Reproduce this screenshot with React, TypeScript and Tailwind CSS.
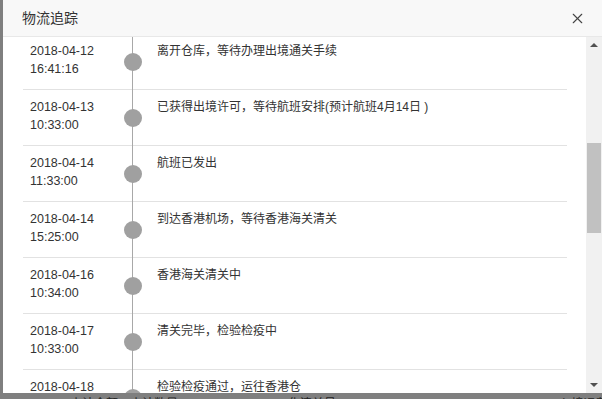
import { X } from "lucide-react";

const records = [
  { date: "2018-04-12", time: "16:41:16", text: "离开仓库，等待办理出境通关手续" },
  { date: "2018-04-13", time: "10:33:00", text: "已获得出境许可，等待航班安排(预计航班4月14日 )" },
  { date: "2018-04-14", time: "11:33:00", text: "航班已发出" },
  { date: "2018-04-14", time: "15:25:00", text: "到达香港机场，等待香港海关清关" },
  { date: "2018-04-16", time: "10:34:00", text: "香港海关清关中" },
  { date: "2018-04-17", time: "10:33:00", text: "清关完毕，检验检疫中" },
  { date: "2018-04-18", time: "10:33:00", text: "检验检疫通过，运往香港仓" },
];

export default function App() {
  return (
    <div className="w-[602px] h-[399px] overflow-hidden bg-[#7f7f7f] font-['Liberation_Sans','Noto_Sans_CJK_SC',sans-serif] text-[#333]">
      <div className="pl-[3px]">
        <div className="h-[393px] flex flex-col bg-white">
          {/* Header */}
          <div className="h-[37px] shrink-0 flex items-center justify-between pl-[19px] pr-[16px] bg-[#f8f8f8] border-b border-[#e8e8e8]">
            <span className="text-[14px] leading-none">物流追踪</span>
            <X className="w-[17px] h-[17px] text-[#444]" strokeWidth={1.6} />
          </div>

          {/* Body */}
          <div className="flex flex-1 min-h-0">
            <div className="flex-1 overflow-hidden">
              <div className="-mt-[3px] ml-[20px] mr-[19px]">
                {records.map((r, i) => (
                  <div key={i} className="flex h-[56px] border-b border-[#e2e2e2]">
                    <div className="w-[100px] pl-[7px] pt-[8px] text-[12.5px] leading-[18px]">
                      <div>{r.date}</div>
                      <div>{r.time}</div>
                    </div>
                    <div className="relative w-[20px] flex items-center justify-center">
                      <div className="absolute left-[9px] -top-px -bottom-px w-px bg-[#a8a8a8]" />
                      <div className="relative w-[18px] h-[18px] rounded-full bg-[#a0a0a0]" />
                    </div>
                    <div className="pl-[14px] pt-[8px] text-[12px] leading-[18px]">{r.text}</div>
                  </div>
                ))}
              </div>
            </div>

            {/* Scrollbar */}
            <div className="w-[16px] shrink-0 flex flex-col bg-[#f1f1f1]">
              <div className="h-[16px] flex items-center justify-center">
                <div className="w-0 h-0 border-l-[4px] border-r-[4px] border-b-[4px] border-l-transparent border-r-transparent border-b-[#505050]" />
              </div>
              <div className="h-[90px] mt-[90px] mx-[1px] bg-[#c1c1c1]" />
              <div className="flex-1" />
              <div className="h-[16px] flex items-center justify-center">
                <div className="w-0 h-0 border-l-[4px] border-r-[4px] border-t-[4px] border-l-transparent border-r-transparent border-t-[#505050]" />
              </div>
            </div>
          </div>
        </div>
      </div>

      {/* Page behind the overlay */}
      <div className="h-[6px] overflow-hidden flex text-[12px] leading-[16px] text-[#1e1e1e] whitespace-nowrap">
        <span className="ml-[70px] mt-[3px]">小计金额：小计数量</span>
        <span className="ml-[110px] mt-[3px]">化清关号 EH0007500000HK</span>
        <span className="ml-[120px] mt-[3px]">入境运费</span>
      </div>
    </div>
  );
}
